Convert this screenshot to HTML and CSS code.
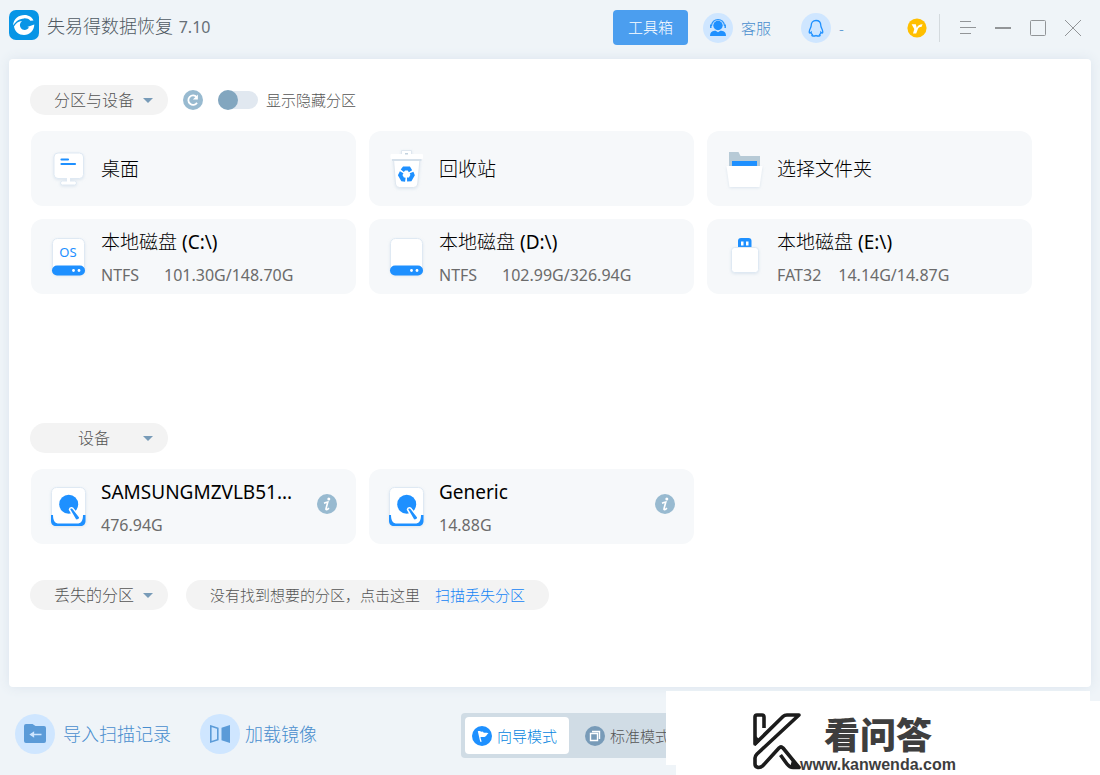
FILE: index.html
```html
<!DOCTYPE html>
<html lang="zh-CN">
<head>
<meta charset="utf-8">
<title>失易得数据恢复</title>
<link rel="stylesheet" href="styles.css">
</head>
<body>
<svg class="defs" aria-hidden="true">
  <defs>
    <filter id="soft" x="-30%" y="-30%" width="160%" height="160%">
      <feDropShadow dx="0" dy="1" stdDeviation="1.5" flood-color="#9db8d0" flood-opacity=".3"/>
    </filter>
    <symbol id="disk" viewBox="0 0 44 49">
      <rect x="6.500" y="6.500" width="32" height="36" rx="5" fill="#fff" stroke="#dfe9f3" filter="url(#soft)"/>
      <rect x="6" y="33.500" width="33" height="10" rx="5" fill="#1e90ff"/>
      <circle cx="27.500" cy="38.500" r="1.400" fill="#fff"/><circle cx="33" cy="38.500" r="1.400" fill="#fff"/>
    </symbol>
    <symbol id="device" viewBox="0 0 44 49">
      <rect x="5.500" y="5.500" width="34" height="38" rx="5" fill="#fff" stroke="#dfe9f3" filter="url(#soft)"/>
      <path d="M5 33h2c0 6 2 8.500 6 8.500h18c4 0 6-2.500 6-8.500h2.500v6c0 3-2 5-5 5h-24.500c-3 0-5-2-5-5z" fill="#1e90ff"/>
      <circle cx="22.700" cy="22.300" r="9.500" fill="#1e90ff"/>
      <path d="M23.500 27.500c.2-2 3-2.300 4-.4l6 7.800c1.200 2-2.600 4.600-4.200 2.600z" fill="#1e90ff" stroke="#fff" stroke-width="1.500"/>
    </symbol>
    <symbol id="info" viewBox="0 0 20 20">
      <circle cx="10" cy="10" r="10" fill="#98bad0"/>
      <circle cx="11.800" cy="5" r="1.500" fill="#fff"/>
      <path d="M7 9.200c1.500-.6 2.500-.9 3.800-1.200L9 14.800c-.3 1.400 1 1.200 3-.6" fill="none" stroke="#fff" stroke-width="1.600"/>
    </symbol>
  </defs>
</svg>

<header class="topbar">
  <svg class="logo" viewBox="0 0 30 30" aria-hidden="true">
    <rect width="30" height="30" rx="7" fill="#0795e6"/>
    <path d="M4 15.500C4.500 9 9.500 5 15.500 5c4.500 0 7.500 2.300 9 5.500l-3.200.2c-1.500-1.700-3.600-2.500-6.300-2.300C10 8.800 7 11 4 15.500z" fill="#fff"/>
    <path d="M5 16.500c2-3.500 4.500-5.300 8-5.500-2.300 2-2.700 4.500-1.300 6.700 1.800 2.900 6.300 3 8.300-.2l-1.700-.4 7-2.600c-.2 6-4.500 10.500-10.300 10.500-5 0-9.300-3.500-10-8.500z" fill="#fff"/>
  </svg>
  <h1 class="title">失易得数据恢复 <span class="version">7.10</span></h1>
  <button class="toolbox">工具箱</button>
  <button class="contact">
    <svg class="contact-icon" viewBox="0 0 30 30" aria-hidden="true">
      <circle cx="15" cy="15" r="15" fill="#cfe6ff"/>
      <path d="M8.500 13C8.500 4.500 21.500 4.500 21.500 13" fill="none" stroke="#2a95fb" stroke-width="1.200"/>
      <circle cx="15" cy="12.500" r="4.700" fill="#1e90ff"/>
      <path d="M7.800 11.500v3.500M22.200 11.500v3.500" stroke="#2a95fb" stroke-width="1.500"/>
      <path d="M7 23c0-3.500 1.500-5 4.500-5.300h1.200l2.300 1.600 2.300-1.600h1.200c3 .3 4.500 1.800 4.500 5.300z" fill="#1e90ff"/>
    </svg>
    客服
  </button>
  <button class="contact contact-qq">
    <svg class="contact-icon" viewBox="0 0 30 30" aria-hidden="true">
      <circle cx="15" cy="15" r="15" fill="#cfe6ff"/>
      <path d="M15 7.500c-3 0-4.800 2-4.800 5 0 2-2 4.300-2 6.500 0 1.500.9 1.300 1.900.3 0 1 .5 1.700 1.200 2.300-.9.900-.3 1.400.7 1.400h2l1-.6 1 .6h2c1 0 1.600-.5.700-1.400.7-.6 1.200-1.300 1.200-2.300 1 1 1.900 1.200 1.900-.3 0-2.200-2-4.500-2-6.500 0-3-1.800-5-4.800-5z" fill="none" stroke="#1e90ff" stroke-width="1.300"/>
    </svg>
    -
  </button>
  <button class="vip" aria-label="会员">
    <svg viewBox="0 0 20 20" aria-hidden="true">
      <circle cx="10" cy="10" r="9.600" fill="#ffbf00"/>
      <path d="M4.600 6.300h4.200l1 3.600c1-2.400 2.600-3.600 5.800-3.600l-1.200 2.800c-2 0-3 .6-3.700 2.400L9.200 15.500H6L7.300 11z" fill="#fff"/>
    </svg>
  </button>
  <nav class="window-controls" aria-label="窗口">
    <button aria-label="菜单"><svg viewBox="0 0 16 16"><path d="M0 1.500h11M0 7.500h16M0 13.500h11"/></svg></button>
    <button aria-label="最小化"><svg viewBox="0 0 16 16"><path d="M0 8h16" stroke-width="2"/></svg></button>
    <button aria-label="最大化"><svg viewBox="0 0 16 16"><rect x=".5" y=".5" width="15" height="15" rx="1"/></svg></button>
    <button aria-label="关闭"><svg viewBox="0 0 16 16"><path d="M0 0l16 16M16 0L0 16"/></svg></button>
  </nav>
</header>

<main class="panel">
  <section class="group group-partitions">
    <div class="group-head">
      <button class="pill" aria-expanded="true"><span class="pill-label">分区与设备</span><span class="arrow"></span></button>
      <button class="refresh" aria-label="刷新">
        <svg viewBox="0 0 20 20" aria-hidden="true">
          <circle cx="10" cy="10" r="10" fill="#98bad0"/>
          <path d="M13.700 7.200A4.700 4.700 0 1 0 14 12.700" fill="none" stroke="#fff" stroke-width="1.800"/>
          <path d="M14.900 4.500v5h-5z" fill="#fff"/>
        </svg>
      </button>
      <label class="switch"><input class="switch-input" type="checkbox">显示隐藏分区</label>
    </div>
    <div class="cards">
      <article class="card"><button class="card-main">
        <svg class="card-icon" viewBox="0 0 44 49" aria-hidden="true">
          <g filter="url(#soft)" fill="#fff" stroke="#dfe9f3"><path d="M20.500 33v5h4v-5z"/><rect x="14.500" y="37" width="16" height="4" rx="2"/><rect x="8" y="9" width="29.500" height="25.500" rx="4"/></g>
          <path d="M21 33h3v5h-3z" fill="#fff"/>
          <path d="M15.500 15.500h6.500M15.500 20h13.500" stroke="#1e90ff" stroke-width="2.200" stroke-linecap="round"/>
        </svg>
        <span class="card-title">桌面</span></button></article>
      <article class="card"><button class="card-main">
        <svg class="card-icon" viewBox="0 0 44 49" aria-hidden="true">
          <g filter="url(#soft)" fill="#fff" stroke="#dfe7ef"><path d="M9.500 15h26.500l-2.300 25a4 4 0 0 1-4 3.500H15.500a4 4 0 0 1-4-3.500z"/><path d="M17.500 11V6.500h10V11"/></g>
          <rect x="6.500" y="10" width="32.500" height="5" rx="1" fill="#fff"/>
          <path d="M21 9h3v1.500h-3z" fill="#c3d2de"/>
          <path d="M8 16h29.500" stroke="#d5e0ea" stroke-width="2"/>
          <g fill="none" stroke="#1e90ff" stroke-width="4"><path d="M18.300 26.700l1.700-2.200h4.800l1.700 2.700"/><path d="M18.300 26.700l1.700-2.200h4.800l1.700 2.700" transform="rotate(120 22.400 30.300)"/><path d="M18.300 26.700l1.700-2.200h4.800l1.700 2.700" transform="rotate(240 22.400 30.300)"/></g>
        </svg>
        <span class="card-title">回收站</span></button></article>
      <article class="card"><button class="card-main">
        <svg class="card-icon" viewBox="0 0 44 49" aria-hidden="true">
          <path d="M7 8h9.500l2 4H38v12H7z" fill="#b7cad6"/>
          <path d="M10 17h25v6H10z" fill="#1e90ff"/>
          <path d="M4.500 22h36L37.500 43h-30z" fill="#fff" filter="url(#soft)"/>
        </svg>
        <span class="card-title">选择文件夹</span></button></article>

      <article class="card"><button class="card-main">
        <svg class="card-icon" viewBox="0 0 44 49" aria-hidden="true"><use href="#disk"/><text class="os-text" x="22" y="25" text-anchor="middle">OS</text></svg>
        <span class="card-text"><span class="card-title">本地磁盘 <span class="latin">(C:\)</span></span><span class="card-meta"><span class="fs">NTFS</span><span>101.30G/148.70G</span></span></span></button></article>
      <article class="card"><button class="card-main">
        <svg class="card-icon" viewBox="0 0 44 49" aria-hidden="true"><use href="#disk"/></svg>
        <span class="card-text"><span class="card-title">本地磁盘 <span class="latin">(D:\)</span></span><span class="card-meta"><span class="fs">NTFS</span><span>102.99G/326.94G</span></span></span></button></article>
      <article class="card"><button class="card-main">
        <svg class="card-icon" viewBox="0 0 44 49" aria-hidden="true">
          <rect x="16" y="6" width="13.500" height="13" rx="3" fill="#1e90ff"/>
          <path d="M19 9.500h2.500v4H19zM24 9.500h2.500v4H24z" fill="#fff"/>
          <rect x="9.500" y="15.500" width="27" height="25" rx="3" fill="#fff" stroke="#dfe9f3" filter="url(#soft)"/>
        </svg>
        <span class="card-text"><span class="card-title">本地磁盘 <span class="latin">(E:\)</span></span><span class="card-meta"><span>FAT32</span><span>14.14G/14.87G</span></span></span></button></article>
    </div>
  </section>

  <section class="group group-devices">
    <div class="group-head"><button class="pill" aria-expanded="true"><span class="pill-label">设备</span><span class="arrow"></span></button></div>
    <div class="cards">
      <article class="card"><button class="card-main">
        <svg class="card-icon" viewBox="0 0 44 49" aria-hidden="true"><use href="#device"/></svg>
        <span class="card-text"><span class="card-title latin">SAMSUNGMZVLB51...</span><span class="card-meta">476.94G</span></span></button>
        <button class="info" aria-label="详情"><svg viewBox="0 0 20 20"><use href="#info"/></svg></button></article>
      <article class="card"><button class="card-main">
        <svg class="card-icon" viewBox="0 0 44 49" aria-hidden="true"><use href="#device"/></svg>
        <span class="card-text"><span class="card-title latin">Generic</span><span class="card-meta">14.88G</span></span></button>
        <button class="info" aria-label="详情"><svg viewBox="0 0 20 20"><use href="#info"/></svg></button></article>
    </div>
  </section>

  <section class="group-head">
    <button class="pill" aria-expanded="true"><span class="pill-label">丢失的分区</span><span class="arrow"></span></button>
    <p class="hint">没有找到想要的分区，点击这里 <a class="hint-link" href="#">扫描丢失分区</a></p>
  </section>
</main>

<footer class="bottombar">
  <button class="action">
    <svg class="action-icon" viewBox="0 0 40 40" aria-hidden="true">
      <circle cx="20" cy="20" r="20" fill="#cfe6ff"/>
      <path d="M9 12a2 2 0 0 1 2-2h6.500l3 2H29a2 2 0 0 1 2 2v13a2 2 0 0 1-2 2H11a2 2 0 0 1-2-2z" fill="#5b9bd8"/>
      <path d="M17 20.500h9.500M18.500 18.500l-3 2 3 2z" stroke="#cfe6ff" stroke-width="1.300" fill="#cfe6ff"/>
    </svg>
    导入扫描记录
  </button>
  <button class="action">
    <svg class="action-icon" viewBox="0 0 40 40" aria-hidden="true">
      <circle cx="20" cy="20" r="20" fill="#cfe6ff"/>
      <path d="M10.800 12l7 2.300v11.400l-7 2.300z" fill="none" stroke="#5b9bd8" stroke-width="1.600"/>
      <path d="M30 11v18l-8.500-2.800V13.800z" fill="#5b9bd8"/>
    </svg>
    加载镜像
  </button>
  <div class="modes">
    <button class="mode mode-active" aria-pressed="true">
      <svg viewBox="0 0 20 20" aria-hidden="true"><circle cx="10" cy="10" r="10" fill="#1e90ff"/><path d="M5.800 5.200c2-1 3.200.7 5.200.4l.3 1c1.500.2 3-.3 5.200.6-1.500.7-1.800 2.800-3.500 3.600-1.500.6-3-.3-4.600.5l1.300 4.500H8.200z" fill="#fff"/></svg>
      向导模式
    </button>
    <button class="mode" aria-pressed="false">
      <svg viewBox="0 0 20 20" aria-hidden="true"><circle cx="10" cy="10" r="10" fill="#789bb8"/><path d="M5.500 7.500h7v7h-7zM7 5.500h7.500v7.500" fill="none" stroke="#fff" stroke-width="1.400"/></svg>
      标准模式
    </button>
  </div>
</footer>

<aside class="watermark">
  <svg class="watermark-logo" viewBox="0 0 52 62" aria-hidden="true">
    <g fill="none" stroke="#1c1c1c" stroke-width="3.600" stroke-linejoin="round">
      <path d="M12 18V7c0-1.500-.5-2-2-2H5C3.500 5 3 5.500 3 7v27L31 6.500C32.500 5 33.500 5 35 5h12L5 44c-1.500 1.500-2 2.500-2 4v6c0 4 5 4.500 8 1.500l16-17.500c1.500-1.500 2.500-1.500 4 0L47 57.500H41c-3 0-4.500-1.500-6-3.500l-6.500-9"/>
    </g>
    <path d="M3 25v11l5.500-5.500zM38 57.500l9 .5-7-8z" fill="#1c1c1c"/>
  </svg>
  <div class="watermark-text"><span class="watermark-name">看问答</span><span class="watermark-url">www.kanwenda.com</span></div>
</aside>
</body>
</html>
```
FILE: styles.css
```css
* { box-sizing: border-box; }
body {
  margin: 0;
  min-height: 100vh;
  display: flex;
  flex-direction: column;
  position: relative;
  overflow: hidden;
  background: #eff4f8;
  color: #555;
  font: 300 15px/20px "Noto Sans", "Noto Sans CJK SC", sans-serif;
}
button {
  margin: 0;
  padding: 0;
  border: 0;
  background: none;
  color: inherit;
  font: inherit;
  text-align: left;
  white-space: nowrap;
  cursor: pointer;
}
svg { display: block; flex: none; }
h1, p { margin: 0; }
.defs { position: absolute; width: 0; height: 0; }
.latin { font-weight: 400; }

.topbar {
  display: flex;
  align-items: center;
  height: 59px;
  padding: 0 19px 4px 9px;
}
.logo { width: 30px; height: 30px; margin-bottom: 5px; }
.title { margin: 0 auto 2px 8px; font-size: 18px; font-weight: 300; line-height: 24px; color: #505a63; }
.version { margin-left: 1px; font-size: 16px; font-weight: 400; color: #666f77; }
.toolbox {
  width: 75px;
  height: 35px;
  margin-right: 15px;
  padding-bottom: 2px;
  border-radius: 4px;
  background: #4b9eef;
  color: #fff;
  text-align: center;
}
.contact { display: flex; align-items: center; gap: 8px; margin-right: 30px; color: #488dce; }
.contact-icon { width: 30px; height: 30px; }
.contact-qq { width: 106px; margin-right: 0; }
.vip svg { width: 20px; height: 20px; }
.window-controls {
  display: flex;
  align-items: center;
  gap: 19px;
  height: 28px;
  margin-left: 12px;
  padding-left: 20px;
  border-left: 1px solid #d4dade;
}
.window-controls svg { width: 16px; height: 16px; fill: none; stroke: #929598; overflow: visible; }

.panel {
  flex: 1;
  margin: 0 9px;
  padding: 26px 59px 26px 21px;
  border-radius: 4px;
  background: #fff;
  box-shadow: 0 0 12px #dbe4ed;
}
.group-partitions { min-height: 338px; }
.group-devices { min-height: 157px; }
.group-head { display: flex; align-items: center; height: 30px; }
.pill {
  display: flex;
  align-items: center;
  gap: 9px;
  width: 138px;
  height: 30px;
  padding: 0 15px 0 24px;
  border-radius: 15px;
  background: #f3f3f3;
  font-size: 16px;
}
.pill-label { flex: 1; text-align: center; }
.arrow { border: 5px solid transparent; border-top-color: #789bb8; border-bottom: 0; }
.refresh { margin: 0 15px; }
.refresh svg { width: 20px; height: 20px; }
.switch { display: flex; align-items: center; gap: 8px; }
.switch-input {
  appearance: none;
  width: 40px;
  height: 18px;
  margin: 0;
  border-radius: 9px;
  background: #e1e8f0;
}
.switch-input::before {
  content: "";
  display: block;
  width: 20px;
  height: 20px;
  margin-top: -1px;
  border-radius: 50%;
  background: #82a6bf;
}
.switch-input:checked::before { margin-left: 20px; }

.cards {
  display: grid;
  grid-template-columns: repeat(3, 1fr);
  gap: 13px;
  margin: 16px 0 0 1px;
}
.card {
  display: flex;
  align-items: center;
  min-width: 0;
  height: 75px;
  padding: 0 19px 0 15px;
  border-radius: 12px;
  background: #f6f8fa;
}
.card-main { display: flex; align-items: center; gap: 11px; flex: 1; min-width: 0; height: 100%; }
.card-icon { width: 44px; height: 49px; margin-bottom: 1px; }
.card-text { display: flex; flex-direction: column; gap: 9px; min-width: 0; padding-top: 1px; }
.card-title { font-size: 19px; line-height: 26px; color: #000; }
.card-meta { display: flex; gap: 17px; font-size: 16px; font-weight: 400; line-height: 22px; color: #6b6b6b; }
.fs { width: 46px; }
.os-text { font-size: 13px; font-weight: 400; fill: #1e90ff; }
.info { margin-bottom: 6px; }
.info svg { width: 20px; height: 20px; }

.hint {
  display: flex;
  align-items: center;
  gap: 15px;
  height: 30px;
  margin-left: 18px;
  padding: 0 24px;
  border-radius: 15px;
  background: #f3f3f3;
  white-space: nowrap;
}
.hint-link { color: #1484f5; text-decoration: none; }

.bottombar {
  display: flex;
  align-items: center;
  height: 88px;
  padding: 5px 15px 0;
}
.action { display: flex; align-items: center; gap: 8px; margin-right: 29px; font-size: 18px; color: #488dce; }
.action:nth-child(2) { gap: 5px; }
.action-icon { width: 40px; height: 40px; }
.modes {
  display: flex;
  align-items: center;
  gap: 9px;
  height: 45px;
  margin: 4px 0 0 115px;
  padding: 4px;
  border-radius: 4px;
  background: #d0dce5;
}
.mode {
  display: flex;
  align-items: center;
  gap: 5px;
  height: 37px;
  padding: 0 12px 0 7px;
  border-radius: 4px;
}
.mode svg { width: 20px; height: 20px; }
.mode-active { background: #fff; color: #0585e0; }

.watermark {
  position: absolute;
  right: 0;
  bottom: 0;
  display: flex;
  width: 434px;
  height: 84px;
  padding: 19px 0 0 86px;
  background: #fff;
  clip-path: polygon(0 0, 424px 0, 424px 10px, 100% 10px, 100% 100%, 10px 100%, 10px 74px, 0 74px);
}
.watermark-logo { width: 52px; height: 62px; }
.watermark-text { display: flex; flex-direction: column; margin-left: -4px; color: #3e3e3e; }
.watermark-name { padding-left: 24px; font: 900 36px/46px "Noto Sans CJK SC", sans-serif; }
.watermark-url { font: bold 16px/18px "Liberation Sans", sans-serif; }
```
